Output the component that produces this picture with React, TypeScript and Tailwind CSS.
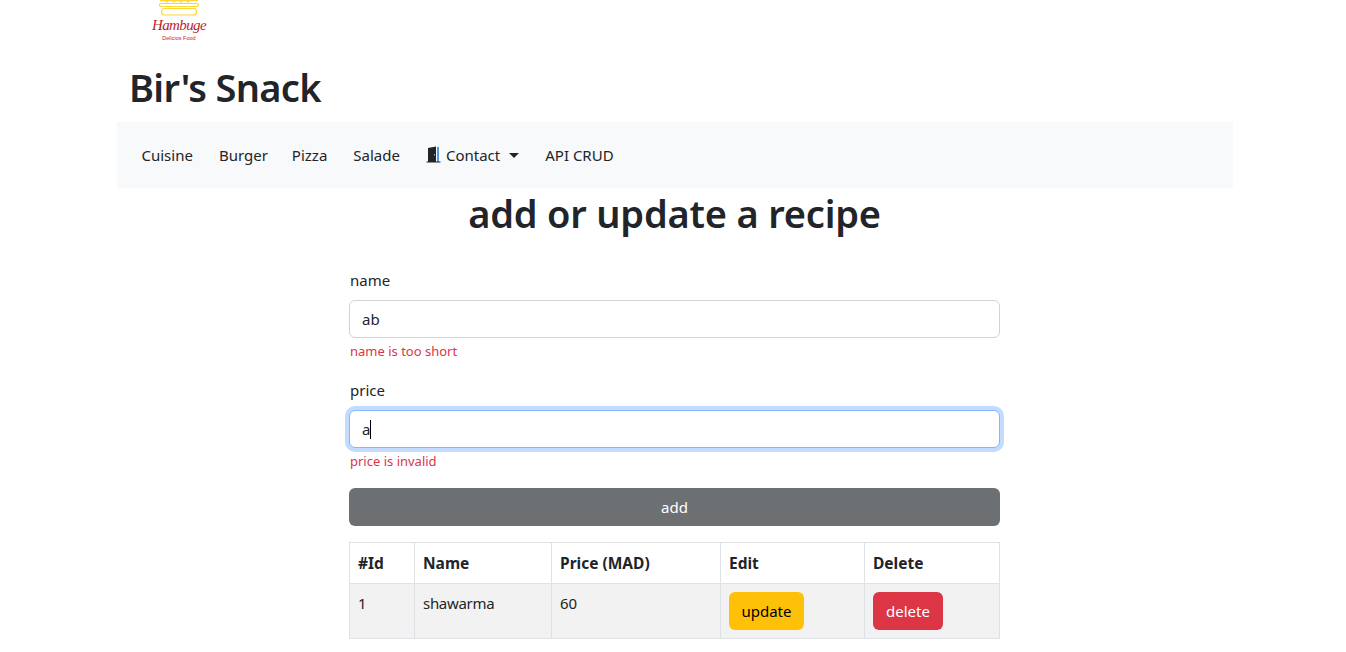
import React from 'react';

const Logo: React.FC = () => (
  <div className="h-[42px] w-[60px] ml-[32px] flex flex-col items-center overflow-hidden">
    <svg width="42" height="16" viewBox="0 0 42 16" fill="none" className="shrink-0">
      <path d="M2 0.5h38" stroke="#ffd633" strokeWidth="1.5" />
      <circle cx="9" cy="1" r="1.6" fill="#ffd633" />
      <circle cx="16" cy="1" r="1.6" fill="#ffd633" />
      <circle cx="23" cy="1" r="1.6" fill="#ffd633" />
      <circle cx="30" cy="1" r="1.6" fill="#ffd633" />
      <rect x="1.5" y="3.5" width="39" height="3" rx="1.5" stroke="#ffd633" strokeWidth="1.2" />
      <rect x="3.5" y="8.5" width="35" height="6.5" rx="3" stroke="#ffd633" strokeWidth="1.2" />
    </svg>
    <span className="font-['Liberation_Serif',serif] italic text-[15px] leading-[18px] tracking-[-0.6px] text-[#b81c2a]">Hambuge</span>
    <span className="font-['Liberation_Sans',sans-serif] text-[5.5px] leading-[8px] text-[#c4202e]">Delicios Food</span>
  </div>
);

const DoorIcon: React.FC = () => (
  <svg width="15" height="18" viewBox="0 0 15 18" className="mr-[5px] shrink-0">
    <path d="M2 2 L10 0.5 V16 H2 Z" fill="#212529" />
    <rect x="11" y="1" width="2" height="15" fill="#4f9be0" />
    <rect x="0.5" y="15.5" width="14" height="1" fill="#212529" />
    <rect x="8" y="8" width="1" height="1.5" fill="#8ab8e0" />
  </svg>
);

const NavLink: React.FC<{ children: React.ReactNode; className?: string }> = ({ children, className }) => (
  <a className={`flex items-center text-[#212529] ${className ?? ''}`}>{children}</a>
);

const Field: React.FC<{ label: string; value: string; error: string; focused?: boolean }> = ({ label, value, error, focused }) => (
  <div className="mb-[16px]">
    <label className="block h-[32px] pl-px leading-[24px] text-[#212529]">{label}</label>
    <div
      className={`h-[38px] rounded-[6px] bg-white border flex items-center pl-[12px] text-[#212529] ${
        focused ? 'border-[#86b7fe] shadow-[0_0_0_4px_#c2dbfe]' : 'border-[#ced4da]'
      }`}
    >
      {value}
      {focused && <span className="w-px h-[19px] bg-black" />}
    </div>
    <div className="mt-[4px] h-[20px] pl-px text-[13px] leading-[19px] text-[#dc3545]">{error}</div>
  </div>
);

const App: React.FC = () => {
  return (
    <div className="w-[1346px] h-[652px] overflow-hidden bg-white font-['Noto_Sans',sans-serif] text-[15px]">
      <div className="ml-[117px] w-[1116px]">
        <Logo />
        <h1 className="pl-[12px] pt-[21px] h-[80px] text-[38px] leading-[48px] tracking-[-0.7px] font-semibold text-[#212529]">Bir's Snack</h1>

        <nav className="h-[66px] bg-[#f8f9fa] flex items-center pl-[24.5px]">
          <NavLink className="mr-[26px]">Cuisine</NavLink>
          <NavLink className="mr-[24px]">Burger</NavLink>
          <NavLink className="mr-[26px]">Pizza</NavLink>
          <NavLink className="mr-[26px]">Salade</NavLink>
          <NavLink className="mr-[26px]">
            <DoorIcon />
            Contact
            <span className="ml-[9px] w-0 h-0 border-x-[5px] border-x-transparent border-t-[5px] border-t-[#212529]" />
          </NavLink>
          <NavLink>API CRUD</NavLink>
        </nav>

        <h2 className="mt-[1px] text-center text-[38px] leading-[48px] tracking-[-0.2px] font-semibold text-[#212529] pr-[1px]">add or update a recipe</h2>

        <div className="ml-[232px] w-[651px] mt-[31px]">
          <Field label="name" value="ab" error="name is too short" />
          <Field label="price" value="a" error="price is invalid" focused />

          <button className="block w-full h-[38px] rounded-[6px] bg-[#6c7073] text-white mb-[16px]">add</button>

          <table className="w-[650px] border-collapse table-fixed text-[#212529]">
            <colgroup>
              <col className="w-[65px]" />
              <col className="w-[137px]" />
              <col className="w-[169px]" />
              <col className="w-[144px]" />
              <col className="w-[135px]" />
            </colgroup>
            <thead>
              <tr className="h-[41px] text-left text-[15.5px]">
                <th className="border border-[#dee2e6] px-[8px] pt-[2px] font-bold">#Id</th>
                <th className="border border-[#dee2e6] px-[8px] pt-[2px] font-bold">Name</th>
                <th className="border border-[#dee2e6] px-[8px] pt-[2px] font-bold">Price (MAD)</th>
                <th className="border border-[#dee2e6] px-[8px] pt-[2px] font-bold">Edit</th>
                <th className="border border-[#dee2e6] px-[8px] pt-[2px] font-bold">Delete</th>
              </tr>
            </thead>
            <tbody>
              <tr className="h-[55px] bg-[#f2f2f2]">
                <td className="border border-[#dee2e6] px-[8px] pt-[8px] align-top">1</td>
                <td className="border border-[#dee2e6] px-[8px] pt-[8px] align-top tracking-[-0.3px]">shawarma</td>
                <td className="border border-[#dee2e6] px-[8px] pt-[8px] align-top">60</td>
                <td className="border border-[#dee2e6] px-[8px] align-middle">
                  <button className="block w-[75px] h-[38px] rounded-[6px] bg-[#ffc107] text-black">update</button>
                </td>
                <td className="border border-[#dee2e6] px-[8px] align-middle">
                  <button className="block w-[70px] h-[38px] rounded-[6px] bg-[#dc3545] text-white">delete</button>
                </td>
              </tr>
            </tbody>
          </table>
        </div>
      </div>
    </div>
  );
};

export default App;
